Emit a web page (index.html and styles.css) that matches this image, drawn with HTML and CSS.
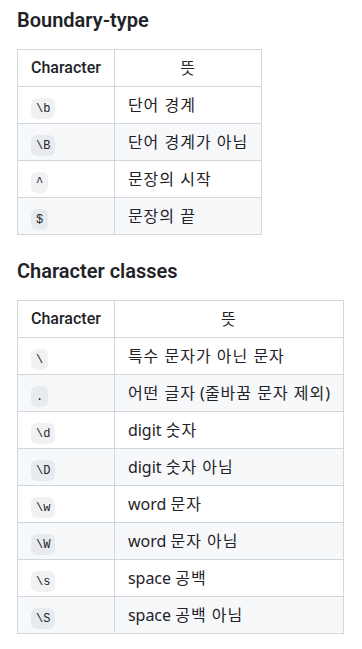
FILE: index.html
```html
<!DOCTYPE html>
<html lang="ko">
<head>
  <meta charset="UTF-8" />
  <meta name="viewport" content="width=device-width, initial-scale=1" />
  <title>정규표현식</title>
  <link rel="stylesheet" href="styles.css">
</head>
<body>
  <div class="markdown-body">

    <h3>Boundary-type</h3>
    <table>
      <thead>
        <tr>
          <th class="char-col">Character</th>
          <th class="mean-col"><span class="ko">뜻</span></th>
        </tr>
      </thead>
      <tbody>
        <tr><td><code>\b</code></td><td><span class="ko">단어 경계</span></td></tr>
        <tr><td><code>\B</code></td><td><span class="ko">단어 경계가 아님</span></td></tr>
        <tr><td><code>^</code></td><td><span class="ko">문장의 시작</span></td></tr>
        <tr><td><code>$</code></td><td><span class="ko">문장의 끝</span></td></tr>
      </tbody>
    </table>

    <h3>Character classes</h3>
    <table>
      <thead>
        <tr>
          <th class="char-col">Character</th>
          <th class="mean-col"><span class="ko">뜻</span></th>
        </tr>
      </thead>
      <tbody>
        <tr><td><code>\</code></td><td><span class="ko">특수 문자가 아닌 문자</span></td></tr>
        <tr><td><code>.</code></td><td><span class="ko">어떤 글자</span> (<span class="ko">줄바꿈 문자 제외</span>)</td></tr>
        <tr><td><code>\d</code></td><td>digit <span class="ko">숫자</span></td></tr>
        <tr><td><code>\D</code></td><td>digit <span class="ko">숫자 아님</span></td></tr>
        <tr><td><code>\w</code></td><td>word <span class="ko">문자</span></td></tr>
        <tr><td><code>\W</code></td><td>word <span class="ko">문자 아님</span></td></tr>
        <tr><td><code>\s</code></td><td>space <span class="ko">공백</span></td></tr>
        <tr><td><code>\S</code></td><td>space <span class="ko">공백 아님</span></td></tr>
      </tbody>
    </table>

  </div>
</body>
</html>
```

FILE: styles.css
```css
body {
  margin: 0;
  padding: 8px 17px;
  background-color: #ffffff;
  color: #1f2328;
  font-family: 'Noto Sans', 'Noto Sans CJK KR', sans-serif;
  font-size: 16px;
  line-height: 1.5;
}

.markdown-body h3 {
  font-family: Roboto, 'Noto Sans', sans-serif;
  font-size: 20px;
  font-weight: 600;
  line-height: 1.25;
  margin: 24px 0 16px 0;
}

.markdown-body h3:first-child {
  margin-top: 0;
}

/* taulukot kuten GitHubissa */
.markdown-body table {
  border-spacing: 0;
  border-collapse: collapse;
  margin: 0 0 16px 0;
}

.markdown-body th,
.markdown-body td {
  padding: 6px 13px;
  border: 1px solid #d0d7de;
  white-space: nowrap;
}

.markdown-body th {
  text-align: center;
}

.markdown-body th.char-col {
  font-family: Roboto, 'Noto Sans', sans-serif;
  font-weight: 500;
  text-align: left;
}

.markdown-body th.mean-col {
  font-weight: normal;
}

/* hangul hieman leveämmäksi */
.ko {
  letter-spacing: 1px;
}

.markdown-body tr {
  background-color: #ffffff;
  border-top: 1px solid #d0d7de;
}

.markdown-body tbody tr:nth-child(2n) {
  background-color: #f6f8fa;
}

.markdown-body code {
  font-family: 'Liberation Mono', 'DejaVu Sans Mono', monospace;
  font-size: 12px;
  padding: 3.5px 5px;
  border-radius: 6px;
  background-color: rgba(175, 184, 193, 0.2);
}
```
